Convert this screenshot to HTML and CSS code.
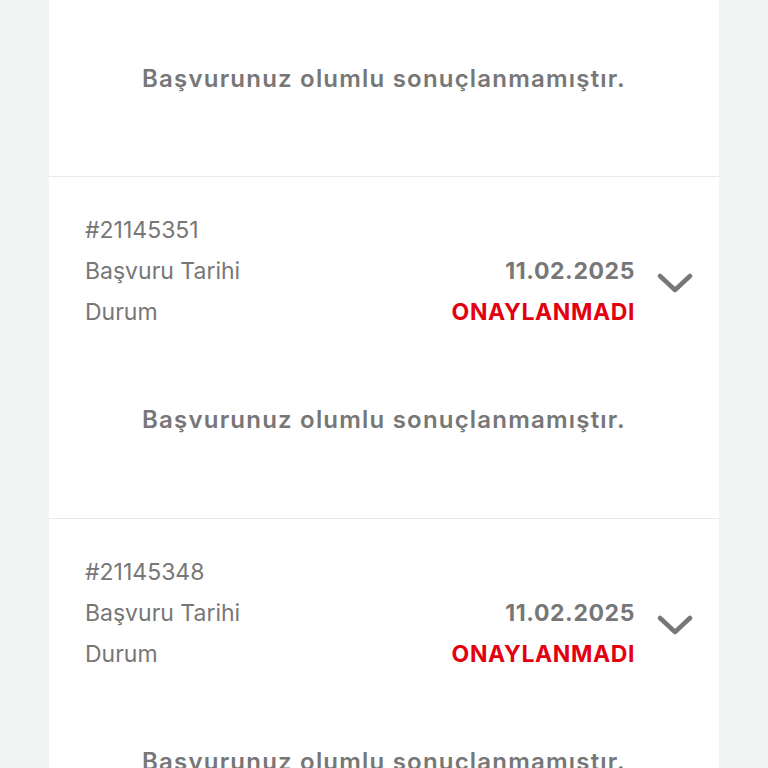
FILE: index.html
```html
<!DOCTYPE html>
<html lang="tr">
<head>
<meta charset="UTF-8" />
<meta name="viewport" content="width=device-width, initial-scale=1" />
<title>Başvurularım</title>
<link rel="stylesheet" href="styles.css">
</head>
<body>

<div class="list">
  <div class="application partial">
    <p class="message">Başvurunuz olumlu sonuçlanmamıştır.</p>
  </div>

  <div class="application">
    <div class="info">
      <div class="app-id">#21145351</div>
      <div class="label">Başvuru Tarihi</div>
      <div class="value">11.02.2025</div>
      <div class="label">Durum</div>
      <div class="value status">ONAYLANMADI</div>
      <svg class="chevron" viewBox="0 0 36 22"><path d="M3 3 L18 17 L33 3" /></svg>
    </div>
    <p class="message">Başvurunuz olumlu sonuçlanmamıştır.</p>
  </div>

  <div class="application">
    <div class="info">
      <div class="app-id">#21145348</div>
      <div class="label">Başvuru Tarihi</div>
      <div class="value">11.02.2025</div>
      <div class="label">Durum</div>
      <div class="value status">ONAYLANMADI</div>
      <svg class="chevron" viewBox="0 0 36 22"><path d="M3 3 L18 17 L33 3" /></svg>
    </div>
    <p class="message">Başvurunuz olumlu sonuçlanmamıştır.</p>
  </div>
</div>

</body>
</html>
```

FILE: styles.css
```css
body {
  margin: 0;
  background: #f2f4f3;
  font-family: Inter, "Noto Sans", sans-serif;
  color: #777;
  overflow: hidden;
}
.list {
  width: 670px;
  margin: 0 auto;
  background: #fff;
}
.application {
  height: 342px;
  box-sizing: border-box;
  border-bottom: 1px solid #e9e9e9;
  padding: 32px 26px 0 36px;
}
.application.partial {
  height: 177px;
  padding-top: 1px;
}
.partial .message {
  margin-top: 63px;
}
.info {
  display: grid;
  grid-template-columns: 1fr auto 58px;
  grid-auto-rows: 41px;
  align-items: center;
  font-size: 23px;
}
.app-id {
  grid-column: 1 / 4;
}
.label {
  grid-column: 1;
}
.value {
  grid-column: 2;
  text-align: right;
  font-weight: 700;
  letter-spacing: 0.6px;
}
.status {
  color: #e3000f;
}
.chevron {
  grid-column: 3;
  grid-row: 2 / 4;
  justify-self: end;
  margin-top: -14px;
  width: 36px;
  height: 22px;
  fill: none;
  stroke: #777;
  stroke-width: 4.5;
  stroke-linecap: round;
  stroke-linejoin: round;
}
.message {
  margin: 73px 0 0 -10px;
  text-align: center;
  font-size: 24px;
  font-weight: 600;
  letter-spacing: 1.2px;
}
```
